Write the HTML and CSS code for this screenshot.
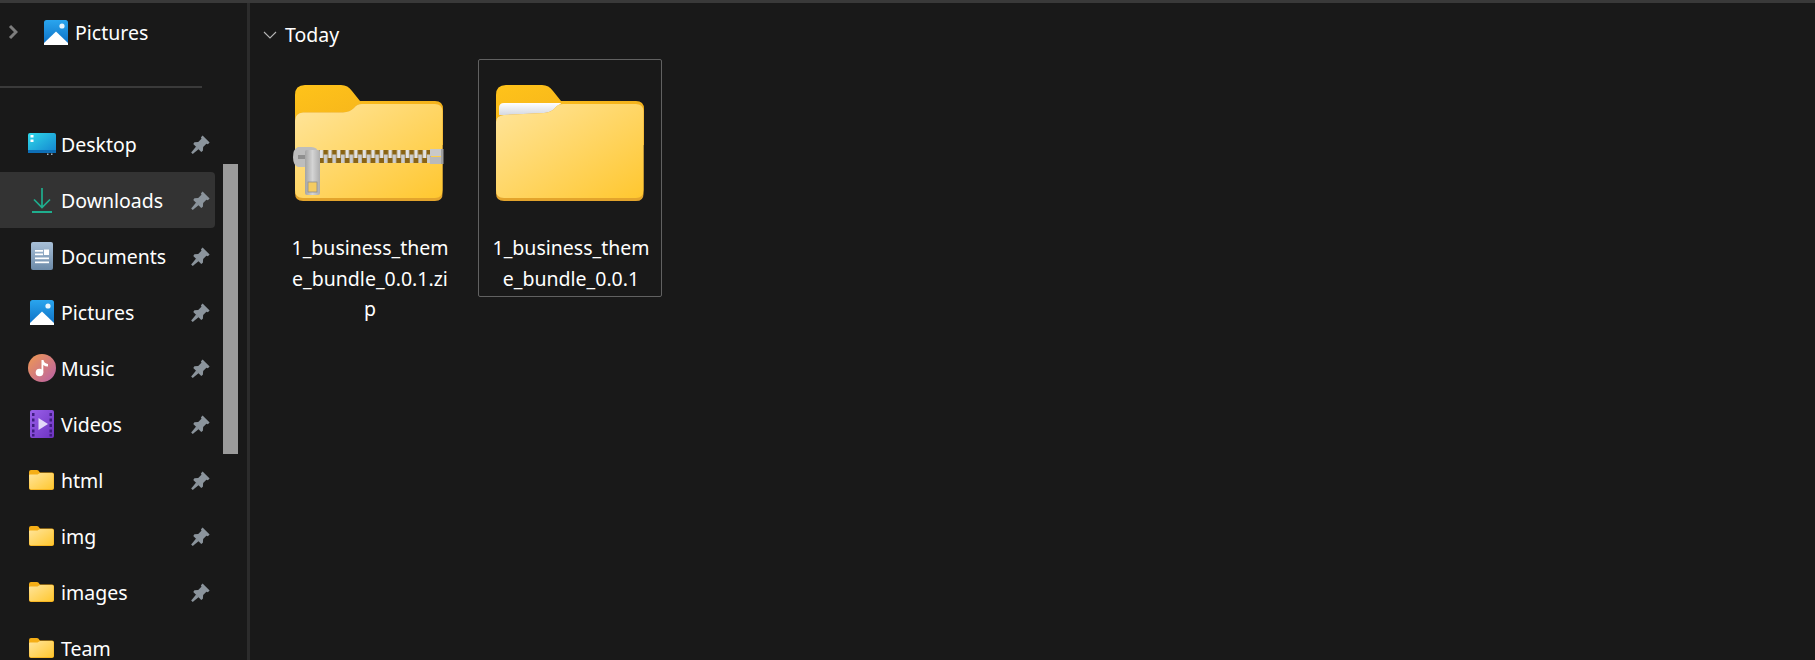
FILE: index.html
```html
<!DOCTYPE html>
<html lang="en">
<head>
<meta charset="utf-8">
<title>Downloads - File Explorer</title>
<link rel="stylesheet" href="styles.css">
</head>
<body>
<svg class="defs" width="0" height="0" aria-hidden="true">
  <defs>
    <linearGradient id="gBack" x1="0" y1="0" x2="1" y2="1"><stop offset="0" stop-color="#ffc31a"/><stop offset="1" stop-color="#eea91c"/></linearGradient>
    <linearGradient id="gFront" x1="0" y1="0" x2="1" y2="1"><stop offset="0" stop-color="#ffe59c"/><stop offset="1" stop-color="#ffc72f"/></linearGradient>
    <linearGradient id="gPaper" x1="0" y1="0" x2="0" y2="1"><stop offset="0" stop-color="#ffffff"/><stop offset="1" stop-color="#d5d8e0"/></linearGradient>
    <linearGradient id="gMetal" x1="0" y1="0" x2="1" y2="0"><stop offset="0" stop-color="#a4a4a4"/><stop offset=".5" stop-color="#d4d4d4"/><stop offset="1" stop-color="#adadad"/></linearGradient>
    <linearGradient id="gPic" x1="0" y1="0" x2="0" y2="1"><stop offset="0" stop-color="#2aa5ee"/><stop offset="1" stop-color="#0c6fc4"/></linearGradient>
    <linearGradient id="gDesk" x1="0" y1="0" x2="1" y2="1"><stop offset="0" stop-color="#2fd8e8"/><stop offset="1" stop-color="#1383d0"/></linearGradient>
    <linearGradient id="gDoc" x1="0" y1="0" x2="0" y2="1"><stop offset="0" stop-color="#a8c0d8"/><stop offset="1" stop-color="#6c8aa8"/></linearGradient>
    <linearGradient id="gMusic" x1="0" y1="0" x2="1" y2="1"><stop offset="0" stop-color="#f09a50"/><stop offset="1" stop-color="#b85fa8"/></linearGradient>
    <linearGradient id="gVid" x1="0" y1="0" x2="1" y2="1"><stop offset="0" stop-color="#9a60ea"/><stop offset="1" stop-color="#6d32c0"/></linearGradient>
    <pattern id="pTeeth" x="24" y="65" width="8.6" height="13" patternUnits="userSpaceOnUse">
      <rect width="8.6" height="13" fill="#8a6414"/>
      <rect x="0.6" y="0" width="3.6" height="8" fill="#e2e2e2"/>
      <rect x="4.8" y="4.500" width="3.6" height="8.500" fill="#cdcdcd"/>
    </pattern>
    <symbol id="pin" viewBox="0 0 20 20">
      <path d="M12.200 0.600 19.600 8 17.800 9.700 16.200 9.200 12.800 12.600 12.500 16.600 10.800 17.800 2.400 9.400 3.600 7.700 7.600 7.400 11 4 10.500 2.400Z" fill="#8b949c"/>
      <path d="M5.400 12 8.200 14.800 1.800 20 0.200 18.400Z" fill="#8b949c"/>
    </symbol>
    <symbol id="pic" viewBox="0 0 24 25">
      <rect width="24" height="25" rx="2.5" fill="url(#gPic)"/>
      <circle cx="18" cy="6" r="2.6" fill="#e8f5fd"/>
      <path d="M0 23 12 11.5 24 23V25H0Z" fill="#fff"/>
    </symbol>
    <symbol id="smallFolder" viewBox="0 0 25 20">
      <path d="M0 2Q0 0 2 0H8Q9.5 0 10.5 2L11 2.6H23Q25 2.6 25 4.6V18Q25 20 23 20H2Q0 20 0 18Z" fill="#f5ae16"/>
      <path d="M0 5.4Q0 4.4 1 4.4H8.5L11 2.9H23Q24.6 2.9 24.6 4.6V18Q24.6 19.3 23 19.3H2Q0.4 19.3 0.4 18Z" fill="url(#gFront)"/>
    </symbol>
  </defs>
</svg>

<div class="window">
  <aside class="sidebar">
    <div class="head">
      <svg class="chev" viewBox="0 0 10 16"><path d="M2 2 8 8 2 14" fill="none" stroke="#7d7d7d" stroke-width="3"/></svg>
      <svg class="ic-pic"><use href="#pic"/></svg>
      <span class="label">Pictures</span>
    </div>
    <div class="sep"></div>
    <ul class="list">
      <li class="row">
        <span class="ic"><svg width="28" height="22" viewBox="0 0 28 22"><rect width="28" height="20" rx="2" fill="url(#gDesk)"/><rect y="17" width="28" height="3" fill="#0e6fb6"/><rect x="2.500" y="2" width="3" height="2.500" fill="#fff"/><rect x="2.500" y="6.500" width="3" height="2.500" fill="#fff"/><rect x="19" y="20.500" width="1.500" height="1.500" fill="#9fb4c4"/><rect x="23" y="20.500" width="1.500" height="1.500" fill="#9fb4c4"/></svg></span>
        <span class="label">Desktop</span><svg class="pin"><use href="#pin"/></svg>
      </li>
      <li class="row active">
        <span class="ic"><svg width="20" height="25" viewBox="0 0 20 25"><path d="M10 0V19M2 11.500 10 19.500 18 11.500" fill="none" stroke="#1fae8e" stroke-width="1.700"/><rect y="23" width="20" height="2" fill="#1fae8e"/></svg></span>
        <span class="label">Downloads</span><svg class="pin"><use href="#pin"/></svg>
      </li>
      <li class="row">
        <span class="ic"><svg width="22" height="28" viewBox="0 0 22 28"><rect width="22" height="28" rx="2" fill="url(#gDoc)"/><rect x="4" y="8" width="8" height="1.700" fill="#fff"/><rect x="4" y="11.500" width="8" height="1.700" fill="#fff"/><rect x="13" y="7.500" width="5" height="5.500" fill="#fff"/><rect x="4" y="15.500" width="14" height="1.700" fill="#fff"/><rect x="4" y="19.500" width="14" height="1.700" fill="#fff"/></svg></span>
        <span class="label">Documents</span><svg class="pin"><use href="#pin"/></svg>
      </li>
      <li class="row">
        <span class="ic"><svg width="24" height="25"><use href="#pic"/></svg></span>
        <span class="label">Pictures</span><svg class="pin"><use href="#pin"/></svg>
      </li>
      <li class="row">
        <span class="ic"><svg width="28" height="28" viewBox="0 0 28 28"><circle cx="14" cy="14" r="14" fill="url(#gMusic)"/><circle cx="11.500" cy="18.500" r="3.800" fill="#fff"/><path d="M13.500 18.500V6H15.500Q16 9.500 20 10V12.500Q17 12.500 15.300 11V18.500Z" fill="#fff"/></svg></span>
        <span class="label">Music</span><svg class="pin"><use href="#pin"/></svg>
      </li>
      <li class="row">
        <span class="ic"><svg width="24" height="28" viewBox="0 0 24 28"><rect width="24" height="28" rx="2" fill="url(#gVid)"/><path d="M2 3h2.500v3H2zM2 8.500h2.500v3H2zM2 14h2.500v3H2zM2 19.500h2.500v3H2zM2 24h2.500v2.500H2zM19.500 3H22v3h-2.500zM19.500 8.500H22v3h-2.500zM19.500 14H22v3h-2.500zM19.500 19.500H22v3h-2.500zM19.500 24H22v2.500h-2.500z" fill="#3f1c80"/><path d="M8.500 8 18 14 8.500 20Z" fill="#e4d8fa"/></svg></span>
        <span class="label">Videos</span><svg class="pin"><use href="#pin"/></svg>
      </li>
      <li class="row">
        <span class="ic"><svg class="folder-ic"><use href="#smallFolder"/></svg></span>
        <span class="label">html</span><svg class="pin"><use href="#pin"/></svg>
      </li>
      <li class="row">
        <span class="ic"><svg class="folder-ic"><use href="#smallFolder"/></svg></span>
        <span class="label">img</span><svg class="pin"><use href="#pin"/></svg>
      </li>
      <li class="row">
        <span class="ic"><svg class="folder-ic"><use href="#smallFolder"/></svg></span>
        <span class="label">images</span><svg class="pin"><use href="#pin"/></svg>
      </li>
      <li class="row">
        <span class="ic"><svg class="folder-ic"><use href="#smallFolder"/></svg></span>
        <span class="label">Team</span>
      </li>
    </ul>
    <div class="scrollbar"></div>
  </aside>

  <main class="content">
    <div class="group">
      <svg class="group-chev" viewBox="0 0 14 8"><path d="M1 1 7 7 13 1" fill="none" stroke="#b5b5b5" stroke-width="1.100"/></svg>
      <span class="label">Today</span>
    </div>
    <div class="files">
      <div class="file">
        <svg class="thumb" viewBox="-3 0 154 116" width="154" height="116">
          <path d="M0 10Q0 0 10 0H46Q53 0 57 6L65 16H140Q148 16 148 24V60H0Z" fill="url(#gBack)"/>
          <path d="M0 36Q0 28 8 27.500H48Q55 27 59 23Q62 19 67 19H140Q147 19 147.500 26V108Q148 116 140 116H8Q0 116 0 108Z" fill="#e3a42c"/>
          <path d="M0 36Q0 28 8 27.500H48Q55 27 59 23Q62 19 67 19H140Q147 19 147.500 26V105Q147.500 113 140 113H8Q0 113 0 105Z" fill="url(#gFront)"/>
          <rect x="24" y="65" width="112" height="13" fill="url(#pTeeth)"/>
          <rect x="135" y="64" width="11" height="7" fill="#c9c9c9"/>
          <rect x="135" y="72" width="11" height="7" fill="#b9b9b9"/>
          <rect x="146" y="64" width="2.500" height="15" fill="#9f9f9f"/>
          <path d="M3 62H16Q23 62 23 68V82H3Q-2 80-2 72Q-2 64 3 62Z" fill="#bdbdbd"/>
          <rect x="3" y="70" width="15" height="4" fill="#8f8f8f"/>
          <rect x="10" y="65" width="15" height="45" rx="2" fill="url(#gMetal)"/>
          <rect x="13" y="97" width="9" height="10" fill="#f5cc62" stroke="#8d8d8d" stroke-width=".8"/>
        </svg>
        <div class="name">1_business_them<br>e_bundle_0.0.1.zi<br>p</div>
      </div>
      <div class="file selected">
        <svg class="thumb" viewBox="-3 0 154 116" width="154" height="116">
          <path d="M0 10Q0 0 10 0H46Q53 0 57 6L65 16H140Q148 16 148 24V60H0Z" fill="url(#gBack)"/>
          <path d="M3 23Q3 18 8 18H65L55 30H3Z" fill="url(#gPaper)"/>
          <path d="M0 37Q0 31 8 30L48 28Q55 27.500 59 23Q62 19 67 19H140Q147 19 147.500 26V108Q148 116 140 116H8Q0 116 0 108Z" fill="#e3a42c"/>
          <path d="M0 37Q0 31 8 30L48 28Q55 27.500 59 23Q62 19 67 19H140Q147 19 147.500 26V105Q147.500 113 140 113H8Q0 113 0 105Z" fill="url(#gFront)"/>
        </svg>
        <div class="name">1_business_them<br>e_bundle_0.0.1</div>
      </div>
    </div>
  </main>
</div>
</body>
</html>
```
FILE: styles.css
```css
* { box-sizing: border-box; }

html, body {
  margin: 0;
  height: 100%;
  overflow: hidden;
  background: #191919;
}

body {
  color: #fff;
  font-family: "Noto Sans", "Open Sans", "Liberation Sans", sans-serif;
  font-size: 19.5px;
}

.defs { position: absolute; }

.window {
  display: flex;
  height: 660px;
  border-top: 3px solid #393939;
}

/* Sidebar */
.sidebar {
  position: relative;
  flex: 0 0 250px;
  border-right: 3px solid #2c2c2c;
  overflow: hidden;
}

.head {
  display: flex;
  align-items: center;
  height: 58px;
  padding-left: 8px;
}

.chev { width: 10px; height: 16px; margin-right: 26px; }
.ic-pic { width: 24px; height: 25px; margin-right: 7px; }

.sep {
  width: 202px;
  height: 2px;
  margin-top: 25px;
  background: #3a3a3a;
}

.list {
  list-style: none;
  margin: 28px 0 0;
  padding: 0;
  width: 215px;
}

.row {
  display: flex;
  align-items: center;
  height: 56px;
  border-radius: 0 4px 4px 0;
}

.row.active { background: #333; }

.ic {
  display: flex;
  justify-content: center;
  align-items: center;
  flex: 0 0 28px;
  margin-left: 28px;
  margin-right: 5px;
}

.folder-ic { width: 25px; height: 20px; margin-left: -1px; }

.pin {
  width: 19px;
  height: 19px;
  margin-left: auto;
  margin-right: 5px;
}

.scrollbar {
  position: absolute;
  left: 223px;
  top: 161px;
  width: 15px;
  height: 290px;
  background: #9b9b9b;
}

/* Content */
.content {
  flex: 1;
  padding: 0 0 0 27px;
}

.group {
  display: flex;
  align-items: center;
  height: 56px;
  padding-top: 7px;
}

.group-chev { width: 14px; height: 8px; margin-right: 8px; margin-left: -14px; }

.files {
  display: flex;
  align-items: flex-start;
  gap: 17px;
}

.file {
  width: 184px;
  padding: 25px 0 2px;
  border: 1px solid transparent;
  border-radius: 2px;
  text-align: center;
}

.file.selected { border-color: #616161; }

.thumb { display: block; margin: 0 auto; }

.name {
  margin-top: 32px;
  padding-left: 2px;
  line-height: 30.5px;
}
```
